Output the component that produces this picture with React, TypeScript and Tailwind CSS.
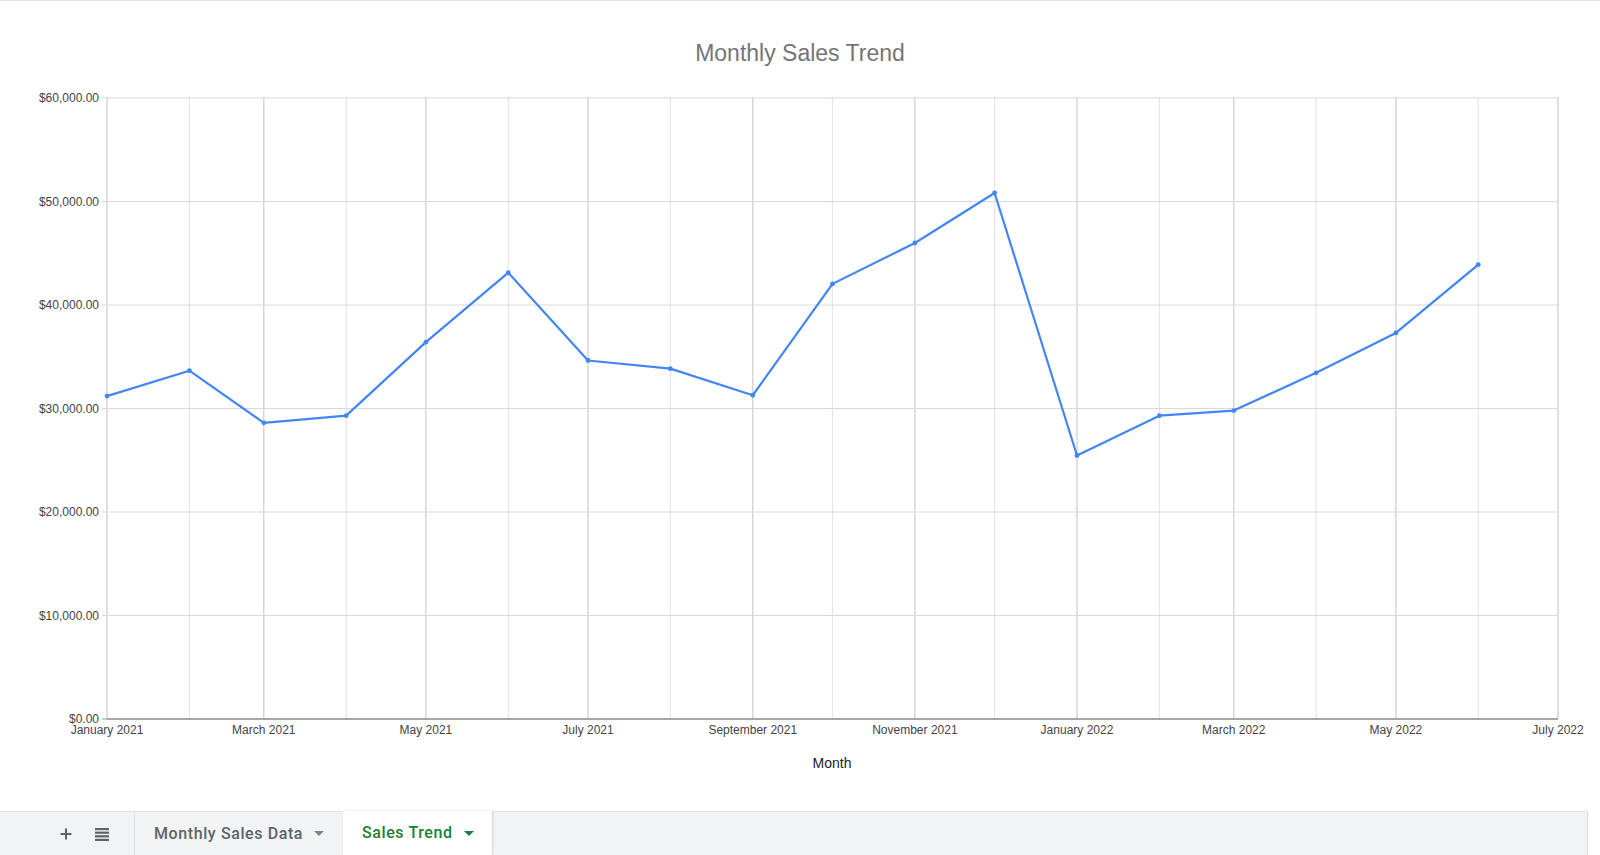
import { Plus } from 'lucide-react'

const LEFT = 107
const RIGHT = 1558
const TOP = 98
const BOTTOM = 719
const DAYS = 546

// day offset of the 1st of each month from Jan 1 2021
const monthDays = [0, 31, 59, 90, 120, 151, 181, 212, 243, 273, 304, 334, 365, 396, 424, 455, 485, 516, 546]

const monthNames = ['January', 'February', 'March', 'April', 'May', 'June', 'July', 'August', 'September', 'October', 'November', 'December']

const sales = [
  31200, 33650, 28620, 29310, 36410, 43120, 34640, 33850, 31280, 42040, 45990, 50820,
  25460, 29310, 29800, 33450, 37300, 43910,
]

const xOf = (day: number) => LEFT + (day / DAYS) * (RIGHT - LEFT)
const yOf = (v: number) => BOTTOM - (v / 60000) * (BOTTOM - TOP)

const font = '"Liberation Sans", Arial, sans-serif'

function SalesChart() {
  const points = sales.map((v, i) => [xOf(monthDays[i]), yOf(v)])
  const yTicks = [0, 10000, 20000, 30000, 40000, 50000, 60000]

  return (
    <svg width={1600} height={810} className="block">
      <g transform="translate(0,-1)">
        <text x={800} y={61} textAnchor="middle" fontFamily={font} fontSize={23} fill="#757575">
          Monthly Sales Trend
        </text>

        {monthDays.map((d, i) => (
          <line
            key={'v' + i}
            x1={xOf(d)}
            x2={xOf(d)}
            y1={TOP - 1}
            y2={BOTTOM}
            stroke={i % 2 === 0 ? '#cccccc' : '#e6e6e6'}
            strokeWidth={1.2}
          />
        ))}

        {yTicks.map((t) => (
          <g key={t}>
            {t > 0 && (
              <line x1={LEFT - 5} x2={RIGHT} y1={yOf(t)} y2={yOf(t)} stroke="#d9d9d9" strokeWidth={1.2} />
            )}
            {t === 0 && <line x1={LEFT - 5} x2={LEFT} y1={yOf(t)} y2={yOf(t)} stroke="#999" strokeWidth={1} />}
            <text x={99} y={yOf(t) + 4} textAnchor="end" fontFamily={font} fontSize={12} fill="#444">
              ${t.toLocaleString('en-US')}.00
            </text>
          </g>
        ))}

        <line x1={LEFT} x2={RIGHT} y1={BOTTOM} y2={BOTTOM} stroke="#888" strokeWidth={1.6} />

        {monthDays.map((d, i) =>
          i % 2 === 0 ? (
            <text key={'l' + i} x={xOf(d)} y={734} textAnchor="middle" fontFamily={font} fontSize={12} fill="#444">
              {monthNames[i % 12]} {i < 12 ? 2021 : 2022}
            </text>
          ) : null,
        )}

        <text x={832} y={768} textAnchor="middle" fontFamily={font} fontSize={14} fill="#222">
          Month
        </text>

        <polyline
          points={points.map((p) => p.join(',')).join(' ')}
          fill="none"
          stroke="#4285f4"
          strokeWidth={2.2}
          strokeLinejoin="round"
        />
        {points.map(([x, y], i) => (
          <circle key={'p' + i} cx={x} cy={y} r={2.4} fill="#4285f4" />
        ))}
      </g>
    </svg>
  )
}

function ListIcon() {
  return (
    <svg width="14" height="14" viewBox="0 0 14 14">
      <rect x="0" y="1" width="14" height="2.2" fill="#5f6368" />
      <rect x="0" y="4.6" width="14" height="2.2" fill="#5f6368" />
      <rect x="0" y="8.2" width="14" height="2.2" fill="#5f6368" />
      <rect x="0" y="11.8" width="14" height="2.2" fill="#5f6368" />
    </svg>
  )
}

function Caret({ color }: { color: string }) {
  return (
    <svg width="10" height="5" viewBox="0 0 10 5">
      <path d="M0 0 L10 0 L5 5 Z" fill={color} />
    </svg>
  )
}

export default function App() {
  return (
    <div className="w-[1600px] h-[855px] flex flex-col bg-white overflow-hidden">
      <div className="flex-1 border-t border-[#e3e3e3]">
        <SalesChart />
      </div>

      <div className="h-[44px] flex items-stretch bg-[#f1f3f4] border-t border-[#e3e3e3] font-['Roboto',sans-serif]">
        <div className="w-[134px] flex items-center pl-[58px] gap-[21px] text-[#5f6368]">
          <Plus size={16} strokeWidth={3} />
          <ListIcon />
        </div>
        <button className="w-[209px] flex items-center pl-[19px] gap-[11px] border-l border-[#e3e3e3] text-[16px] tracking-[0.6px] font-medium text-[#5f6368]">
          <span>Monthly Sales Data</span>
          <Caret color="#80868b" />
        </button>
        <button className="w-[149px] flex items-center pl-[19px] gap-[11px] bg-white text-[16px] tracking-[0.6px] font-medium text-[#188038] shadow-[1px_0_2px_rgba(0,0,0,0.15)] -mt-px">
          <span>Sales Trend</span>
          <Caret color="#188038" />
        </button>
        <div className="flex-1" />
        <div className="w-[13px] bg-white border-l border-[#dadce0] -mt-px" />
      </div>
    </div>
  )
}
